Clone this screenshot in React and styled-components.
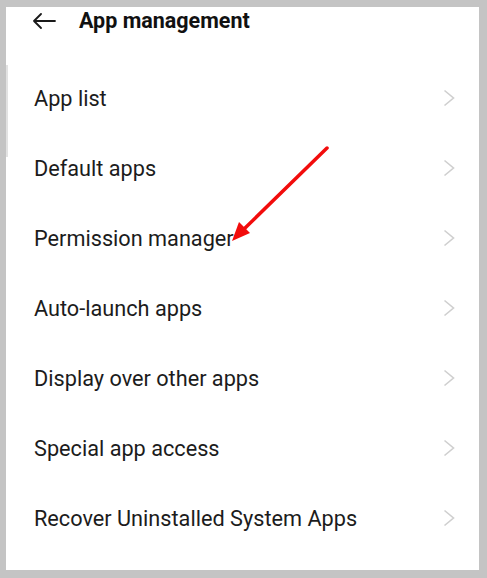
import styled, { createGlobalStyle } from "styled-components";

const items = [
  "App list",
  "Default apps",
  "Permission manager",
  "Auto-launch apps",
  "Display over other apps",
  "Special app access",
  "Recover Uninstalled System Apps",
];

export default function App() {
  return (
    <>
      <GlobalStyle />
      <Frame>
        <Panel>
          <ScrollEdge />
          <Header>
            <BackButton aria-label="Back">
              <svg width="24" height="16" viewBox="0 0 24 16">
                <path
                  d="M23 8H2M9 1L2 8l7 7"
                  fill="none"
                  stroke="#1a1a1a"
                  strokeWidth="1.8"
                  strokeLinecap="round"
                  strokeLinejoin="round"
                />
              </svg>
            </BackButton>
            <Title>App management</Title>
          </Header>
          <List>
            {items.map((label) => (
              <Row key={label}>
                <Label>{label}</Label>
                <svg width="12" height="18" viewBox="0 0 12 18">
                  <path
                    d="M1.5 1.5l9 7.5-9 7.5"
                    fill="none"
                    stroke="#cfcfcf"
                    strokeWidth="1.6"
                  />
                </svg>
              </Row>
            ))}
          </List>
          <Annotation width="487" height="578" viewBox="0 0 487 578">
            <line
              x1="327"
              y1="148"
              x2="242"
              y2="231"
              stroke="#f20c0c"
              strokeWidth="3.5"
              strokeLinecap="round"
            />
            <polygon points="232,241 239,222 250,233" fill="#f20c0c" />
          </Annotation>
        </Panel>
      </Frame>
    </>
  );
}

const GlobalStyle = createGlobalStyle`
  html, body {
    margin: 0;
    padding: 0;
    background: #c4c4c4;
  }
`;

const Frame = styled.div`
  width: 487px;
  height: 578px;
  box-sizing: border-box;
  padding: 7px 8px 8px 6px;
  background: #c4c4c4;
`;

const Panel = styled.div`
  position: relative;
  height: 100%;
  background: #ffffff;
  font-family: Roboto, "Noto Sans", sans-serif;
  color: #1c1c1c;
`;

const ScrollEdge = styled.div`
  position: absolute;
  left: 0;
  top: 58px;
  width: 2px;
  height: 92px;
  background: #e2e2e2;
`;

const Header = styled.div`
  display: flex;
  align-items: center;
  height: 27px;
  padding-left: 26px;
`;

const BackButton = styled.div`
  display: flex;
  align-items: center;
  width: 47px;
`;

const Title = styled.div`
  font-size: 21.5px;
  font-weight: 700;
  color: #111;
`;

const List = styled.div`
  display: flex;
  flex-direction: column;
  padding-top: 29px;
`;

const Row = styled.div`
  display: flex;
  align-items: center;
  justify-content: space-between;
  height: 70px;
  padding: 0 24px 0 28px;
`;

const Label = styled.span`
  font-size: 21.7px;
  color: #1c1c1c;
`;

const Annotation = styled.svg`
  position: absolute;
  left: -6px;
  top: -7px;
  pointer-events: none;
`;
